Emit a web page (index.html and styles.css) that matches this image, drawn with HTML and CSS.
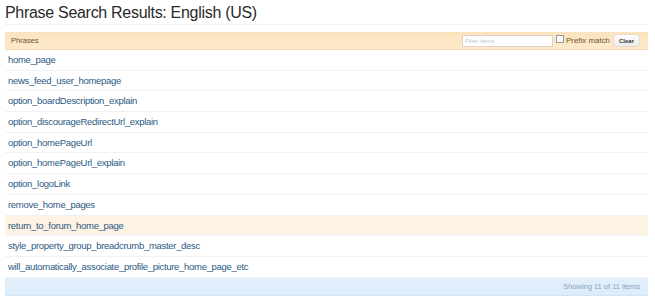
FILE: index.html
```html
<!DOCTYPE html>
<html>
<head>
<meta charset="utf-8">
<link rel="stylesheet" href="styles.css">
</head>
<body>
<div class="page">
  <h1 class="title">Phrase Search Results: English (US)</h1>
  <div class="list">
    <div class="head">
      <span class="head-label">Phrases</span>
      <div class="filter">
        <input class="filter-input" type="text" placeholder="Filter items">
        <label class="prefix"><span class="check"></span>Prefix match</label>
        <button class="clear">Clear</button>
      </div>
    </div>
    <div class="row"><a>home_page</a></div>
    <div class="row"><a>news_feed_user_homepage</a></div>
    <div class="row"><a>option_boardDescription_explain</a></div>
    <div class="row"><a>option_discourageRedirectUrl_explain</a></div>
    <div class="row"><a>option_homePageUrl</a></div>
    <div class="row"><a>option_homePageUrl_explain</a></div>
    <div class="row"><a>option_logoLink</a></div>
    <div class="row"><a>remove_home_pages</a></div>
    <div class="row hl"><a>return_to_forum_home_page</a></div>
    <div class="row"><a>style_property_group_breadcrumb_master_desc</a></div>
    <div class="row"><a>will_automatically_associate_profile_picture_home_page_etc</a></div>
    <div class="foot">Showing 11 of 11 items</div>
  </div>
</div>
</body>
</html>
```
FILE: styles.css
```css
html, body { margin: 0; padding: 0; background: #fff; }
body { font-family: "Liberation Sans", sans-serif; }
.page { padding: 0 7px 0 5px; }
.title {
  margin: 0;
  padding: 1px 0 0 0;
  height: 23px;
  font-family: "Liberation Sans", sans-serif;
  font-weight: normal;
  font-size: 16px;
  letter-spacing: -0.3px;
  line-height: 23px;
  color: #2a2a2a;
  border-bottom: 1px solid #eef3f8;
}
.list { margin-top: 7px; }
.head {
  height: 17px;
  display: flex;
  align-items: center;
  justify-content: space-between;
  background: linear-gradient(#fbe3bd, #fde9cc);
  border-bottom: 1px solid #f5d9ad;
  padding: 0 8px 0 6px;
}
.head-label { font-size: 7.5px; color: #6e5330; }
.filter { display: flex; align-items: center; }
.filter-input {
  width: 85px; height: 10px; padding: 0 2px; margin: 0;
  border: 1px solid #ddd3c2; background: #fff;
  font-size: 6px; font-family: "Liberation Sans", sans-serif;
}
.filter-input::placeholder { color: #b8c4d4; font-style: italic; }
.prefix { display: flex; align-items: center; font-size: 7.8px; color: #6e5330; margin-left: 3px; letter-spacing: 0.05px; }
.check { width: 6px; height: 6px; border: 1px solid #9a9a9a; background: #fbfbfb; margin-right: 2px; margin-top: -3px; }
.clear {
  margin: 0 0 0 3px; padding: 0 5px; height: 13px;
  font-size: 6px; font-family: "Liberation Sans", sans-serif; font-weight: bold; color: #333;
  border: 1px solid #e8dcc8; border-radius: 4px;
  background: linear-gradient(#fff, #ececec);
}
.row {
  height: 19.7px;
  line-height: 19.7px;
  border-bottom: 1px solid #edf2f7;
  padding-left: 3px;
  font-family: "Liberation Sans", sans-serif;
  font-size: 9.5px;
  letter-spacing: -0.3px;
}
.row a { color: #2b5a84; }
.row.hl { background: #fdf2e3; }
.foot {
  height: 17px;
  line-height: 17px;
  background: linear-gradient(#e3f0fb, #dcecfa);
  border-bottom: 1px solid #d2e4f4;
  text-align: right;
  padding-right: 8px;
  font-size: 7.5px;
  color: #8aa2b8;
}
```
